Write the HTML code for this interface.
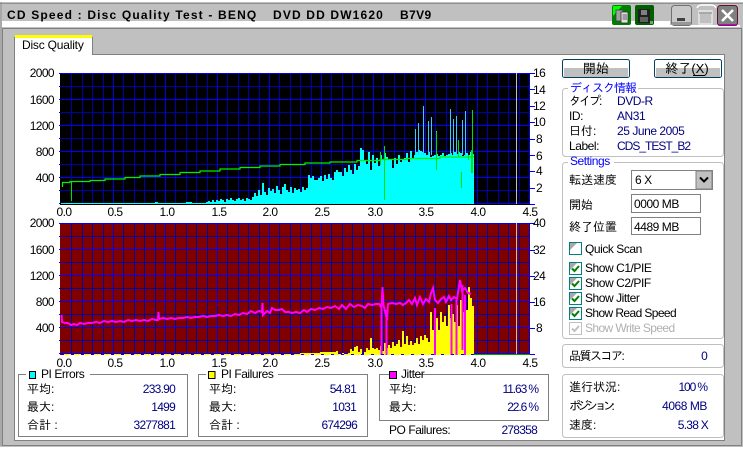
<!DOCTYPE html>
<html lang="ja"><head><meta charset="utf-8"><title>CD Speed</title>
<style>
html,body{margin:0;padding:0;background:#fff}
body{width:743px;height:449px;overflow:hidden}
svg{display:block;letter-spacing:-.45px}
text{font-family:"Liberation Sans","IPAGothic","Noto Sans CJK JP",sans-serif;font-size:12px;fill:#000}
.n{letter-spacing:-.6px}
.v{fill:#000080;text-anchor:end;letter-spacing:-.75px}
.p{letter-spacing:-1.1px}
.u{fill:#000080}
.b{fill:#0000ff}
.c{text-anchor:middle}
.e{text-anchor:end}
.g{fill:#b0b0b0}
.j{letter-spacing:0}
.box{fill:none;stroke:#808080}
.rb{fill:none;stroke:#c0c0c0}
</style></head><body>
<svg xmlns="http://www.w3.org/2000/svg" width="743" height="449" viewBox="0 0 743 449">
<defs>
<g id="grid" shape-rendering="crispEdges" fill="none">
<path stroke="#0000a8" d="M71.5 0V131M82.5 0V131M92.5 0V131M103.5 0V131M123.5 0V131M134.5 0V131M144.5 0V131M155.5 0V131M175.5 0V131M186.5 0V131M196.5 0V131M207.5 0V131M227.5 0V131M238.5 0V131M248.5 0V131M259.5 0V131M279.5 0V131M290.5 0V131M300.5 0V131M311.5 0V131M331.5 0V131M342.5 0V131M352.5 0V131M363.5 0V131M383.5 0V131M394.5 0V131M404.5 0V131M415.5 0V131M435.5 0V131M446.5 0V131M456.5 0V131M467.5 0V131M487.5 0V131M498.5 0V131M508.5 0V131M519.5 0V131"/>
<path stroke="#0000a8" d="M59 13.5H529M59 39.5H529M59 65.5H529M59 91.5H529M59 117.5H529"/>
<path stroke="#0000e0" d="M113.5 0V131M165.5 0V131M217.5 0V131M269.5 0V131M321.5 0V131M373.5 0V131M425.5 0V131M477.5 0V131M529.5 0V131"/>
<path stroke="#0000ff" d="M59 .5H530M59 26.5H530M59 52.5H530M59 78.5H530M59 104.5H530M59 130.5H530"/>
<path stroke="#c0c0c0" d="M516.5 0V131"/>
</g>
<g id="chk">
<rect x=".5" y=".5" width="12" height="12" fill="#fff" stroke="#008080"/>
<path d="M1 1H8L1 8Z" fill="#a8a8a8"/>
</g>
<path id="tick" d="M3 6.5L5.5 9 10 4" fill="none" stroke-width="2"/>
</defs>

<!-- window frame -->
<rect width="743" height="449" fill="#fff"/>
<rect x="0" y="2" width="743" height="445" fill="#c0c0c0"/>
<path d="M0 3.5H743" stroke="#909090" shape-rendering="crispEdges"/>
<path d="M1 2V446" stroke="#909090"/>
<rect x="2" y="21" width="668" height="6" fill="#fff"/>
<rect x="670" y="25" width="70" height="2" fill="#fff"/>
<rect x="3" y="28" width="738" height="417" fill="#c0c0c0"/>
<path d="M2.5 445.500V28.500H741.500V445.500H2.500Z" fill="none" stroke="#808080" shape-rendering="crispEdges"/>
<text x="7" y="20" style="font-weight:bold;letter-spacing:1.18px" transform="translate(0,-1)">CD Speed : Disc Quality Test - BENQ</text>
<text x="273" y="19" style="font-weight:bold;letter-spacing:1.15px">DVD DD DW1620</text>
<text x="400" y="19" style="font-weight:bold;letter-spacing:.4px">B7V9</text>

<!-- title icons -->
<rect x="612" y="5" width="19" height="20" rx="2" fill="#008000"/>
<path d="M613 6H622L613 16Z" fill="#00ff00"/>
<rect x="616" y="10" width="7" height="11" fill="#a0a0a0" stroke="#404040" stroke-width=".8"/>
<rect x="621" y="12" width="7" height="11" fill="#e0e0e0" stroke="#303030" stroke-width=".8"/>
<path d="M622.500 15H627M622.500 17H627M622.500 19H627" stroke="#303030" stroke-width=".8"/>
<rect x="635" y="5" width="19" height="20" rx="2" fill="#006000"/>
<path d="M638 9H650V23H638Z" fill="#202020"/>
<rect x="641" y="10" width="6" height="5" fill="#808080"/>
<rect x="640" y="17" width="8" height="5" fill="#606060"/>
<rect x="650" y="21" width="3" height="3" fill="#909090"/>
<rect x="671.500" y="5.500" width="20" height="20" rx="3" fill="#c8c8c8" stroke="#707070"/>
<rect x="672" y="22" width="19" height="3" fill="#989898"/>
<rect x="677" y="18" width="8" height="3" fill="#404040"/>
<path d="M697 8Q698 5 702 5H711Q715 5 716 8" fill="none" stroke="#fff" stroke-width="1.500"/>
<rect x="699" y="11" width="13" height="13" fill="none" stroke="#e8e8e8" stroke-width="1.500"/>
<path d="M699 13H712" stroke="#a8a8a8" stroke-width="2"/>
<rect x="717.500" y="5.500" width="20" height="20" rx="3" fill="#808080" stroke="#601030"/>
<path d="M718 25H737" stroke="#a000a0" stroke-width="1.500"/>
<path d="M722 10L733 21M733 10L722 21" stroke="#fff" stroke-width="2.500"/>

<!-- tab & page -->
<rect x="14.500" y="54.500" width="710" height="386" fill="#fff" stroke="#808080" shape-rendering="crispEdges"/>
<rect x="15" y="37" width="77" height="18" fill="#fff"/>
<path d="M14.500 54V37M92.500 37V54" stroke="#808080" shape-rendering="crispEdges"/>
<rect x="15" y="35" width="77" height="3" fill="#ffff00"/>
<rect x="15" y="54" width="77" height="1" fill="#fff"/>
<text x="22" y="49" style="letter-spacing:-.2px">Disc Quality</text>

<!-- upper chart -->
<rect x="60" y="73" width="470" height="132" fill="#000"/>
<use href="#grid" y="73"/>
<path fill="#00ffff" shape-rendering="crispEdges" d="M61 204V203H155V202H158V203H186V202H192V203H206V202h2V201h2V202h2V200h2V202h2V200h2V201h2V199h2V200h2V202h2V199h2V200h2V198h2V200h2V201h2V199h2V198h2V200h2V199h2V201h2V198h2V199h2V200h2V197h2V193h2V196h2V190h2V195h2V183h2V192h2V195h2V188h2V191h2V189h2V193h2V186h2V190h2V194h2V187h2V184h2V190h2V192h2V187h2V193h2V188h2V190h2V189h2V192h2V187h2V190h2V188h2V175h2V178h2V176h2V180h2V180h2V178h2V176h2V181h2V175h2V179h2V174h2V178h2V180h2V172h2V170h2V172h2V172h2V176h2V168h2V172h2V165h2V170h2V174h2V164h2V170h2V166h2V148h2V150h2V160h2V164h2V152h2V170h2V155h2V163h2V158h2V166h2V155h2V160h2V153h2V157h2V160h2V160h2V168h2V158h2V164h2V155h2V162h2V160h2V158h2V153h2V162h2V151h2V158h2V155h2V152h2V150h2V151h2V152h2V153h2V155h2V152h2V157h2V156h2V155h2V154h2V156h2V155h2V153h2V156h2V155h2V154h2V153h2V155h2V152h2V154h2V152h2V153h2V156h2V155h2V153h2V155h2V152h2V154h2V156H474V204Z"/>
<path stroke="#33ccff" fill="none" shape-rendering="crispEdges" d="M415.500 129V155M418.500 123V155M423.500 106V155M428.500 121V155M431.500 117V155M436.500 131V155M450.500 109V155M453.500 119V155M456.500 116V155M462.500 120V155M465.500 111V155"/>
<path stroke="#00f000" fill="none" stroke-width="1.200" d="M62.500 187V182.500H70V181.500H90V180.500H105V179H125V177.500H140V176H160V174.500H180V172.500H200V171H220V169H240V167.500H260V166H280V164.500H305V163H330V162H357V160.500H380V159.500H407V158.500H440V157H474"/>
<path stroke="#00e000" fill="none" shape-rendering="crispEdges" stroke-width="1" d="M71.500 182V201M380.500 152V165M384.500 146V200M436.500 132V170M458.500 140V157M461.500 172V188M471.500 150V173M472.500 110V173M468.500 155V160"/>

<!-- lower chart -->
<rect x="60" y="223" width="470" height="132" fill="#800000"/>
<use href="#grid" y="223"/>
<path fill="#ffff00" shape-rendering="crispEdges" d="M61 355V354H300V353H320V352H336V351h2V354h2V354h2V353h2V354h2V354h2V353h2V349h2V351h2V347h2V346h2V352h2V349h2V354h2V352h2V348h2V350h2V338h2V348h2V349h2V348h2V350h2V346h2V351h2V343h2V348h2V345h2V348h2V342h2V346h2V344h2V340h2V347h2V331h2V344h2V336h2V345h2V341h2V345h2V343h2V338h2V344h2V336h2V340h2V335h2V338h2V342h2V312h2V330h2V325h2V318h2V330h2V312h2V322h2V316h2V326h2V305h2V318h2V314h2V322h2V305h2V326h2V300h2V312h2V304h2V310h2V287h2V298h2V306h2V318H474V355Z"/>
<path fill="none" stroke="#ff00ff" shape-rendering="crispEdges" stroke-width="2" d="M381.500 303V355M386.500 310V355M435 308V355M451.500 304V355M456.500 300V355M462.500 285V350M465 295V355"/>
<path fill="none" stroke="#ff00ff" stroke-width="2" d="M61.500 315L62 322 65 323 68 323 71 325 74 324 77 325 80 323 84 324 88 323 92 323 96 322 100 323 104 321 108 322 112 321 116 322 120 321 124 322 128 320 132 321 136 320 140 321 144 320 148 321 152 319 156 320 158 320 158.500 312 159 319 163 318 167 319 171 318 175 319 179 318 183 318 187 317 191 318 195 317 199 317 203 316 207 317 211 316 215 316 219 315 223 316 227 315 231 316 235 314 239 315 243 313 247 314 251 311 255 313 259 311 262 312 262.500 303 263 315 267 311 270 313 272 308 275 310 279 310 282 309 285 312 289 312 292 313 296 312 300 313 304 310 307 312 311 309 315 310 319 308 323 309 327 307 331 308 335 306 339 309 342 305 346 309 350 304 354 307 358 305 362 306 365 308 368 304 372 305 376 304 379 304 381.500 308 382.500 287 383.500 305 387 320 388 304 392 303 396 304 400 303 403 305 406 303 409 300 412 304 415 298 417 305 420 297 423 304 426 299 429 302 431 293 433 288 435 300 438 303 441 299 444 297 446 302 449 296 451 300 454 297 457 299 460 280 462 291 465 288 468 293 471 294"/>
<path stroke="#00a000" shape-rendering="crispEdges" d="M474 354.500H530"/>
<path stroke="#0000ff" shape-rendering="crispEdges" stroke-dasharray="3 7" d="M61 354.500H474"/>

<!-- right axis ticks -->
<path stroke="#0000ff" shape-rendering="crispEdges" d="M530 73.500H535M530 89.500H535M530 106.500H535M530 122.500H535M530 139.500H535M530 155.500H535M530 171.500H535M530 188.500H535M530 204.500H535M530 223.500H535M530 250.500H535M530 276.500H535M530 302.500H535M530 328.500H535M530 354.500H535"/>

<!-- axis labels -->
<g class="n">
<text x="54" y="77" class="e">2000</text><text x="54" y="104" class="e">1600</text><text x="54" y="130" class="e">1200</text><text x="54" y="156" class="e">800</text><text x="54" y="182" class="e">400</text>
<text x="54" y="227" class="e">2000</text><text x="54" y="254" class="e">1600</text><text x="54" y="280" class="e">1200</text><text x="54" y="306" class="e">800</text><text x="54" y="332" class="e">400</text>
<text x="533" y="77">16</text><text x="533" y="94">14</text><text x="533" y="110">12</text><text x="533" y="126">10</text><text x="536" y="143">8</text><text x="536" y="160">6</text><text x="536" y="175">4</text><text x="536" y="192">2</text>
<text x="533" y="227">40</text><text x="533" y="254">32</text><text x="533" y="280">24</text><text x="533" y="306">16</text><text x="536" y="332">8</text>
<g class="c">
<text x="64" y="216">0.0</text><text x="115" y="216">0.5</text><text x="167" y="216">1.0</text><text x="219" y="216">1.5</text><text x="270" y="216">2.0</text><text x="322" y="216">2.5</text><text x="375" y="216">3.0</text><text x="426" y="216">3.5</text><text x="478" y="216">4.0</text><text x="530" y="216">4.5</text>
<text x="64" y="367">0.0</text><text x="115" y="367">0.5</text><text x="167" y="367">1.0</text><text x="219" y="367">1.5</text><text x="270" y="367">2.0</text><text x="322" y="367">2.5</text><text x="375" y="367">3.0</text><text x="426" y="367">3.5</text><text x="478" y="367">4.0</text><text x="530" y="367">4.5</text>
</g></g>

<!-- stat boxes -->
<g shape-rendering="crispEdges">
<rect class="box" x="18.500" y="374.500" width="169" height="62"/>
<rect x="26" y="372" width="64" height="6" fill="#fff"/>
<rect x="29.500" y="371.500" width="6" height="7" fill="#00ffff" stroke="#000"/>
<rect class="box" x="198.500" y="374.500" width="169" height="62"/>
<rect x="206" y="372" width="72" height="6" fill="#fff"/>
<rect x="208.500" y="371.500" width="6.500" height="7" fill="#ffff00" stroke="#000"/>
<rect class="box" x="379.500" y="374.500" width="169" height="46"/>
<rect x="389" y="372" width="24" height="6" fill="#fff"/>
<rect x="389.500" y="371.500" width="7" height="7" fill="#ff00ff" stroke="#000"/>
</g>
<text x="41" y="378">PI Errors</text>
<text x="221" y="378">PI Failures</text>
<text x="401" y="378">Jitter</text>
<text x="27" y="393" class="j">平均:</text><text x="27" y="411" class="j">最大:</text><text x="27" y="429" class="j">合計 :</text>
<text x="175" y="393" class="v">233.90</text><text x="175" y="411" class="v">1499</text><text x="175" y="429" class="v">3277881</text>
<text x="209" y="393" class="j">平均:</text><text x="209" y="411" class="j">最大:</text><text x="209" y="429" class="j">合計 :</text>
<text x="356" y="393" class="v">54.81</text><text x="356" y="411" class="v">1031</text><text x="357" y="429" class="v">674296</text>
<text x="389" y="393" class="j">平均:</text><text x="389" y="411" class="j">最大:</text>
<text x="538" y="393" class="v p">11.63 %</text><text x="538" y="411" class="v p">22.6 %</text>
<text x="389" y="434">PO Failures:</text><text x="537" y="434" class="v">278358</text>

<!-- buttons -->
<rect x="562.500" y="59.500" width="67" height="18" rx="2" fill="#fff" stroke="#004060"/>
<rect x="564" y="68" width="64" height="9" fill="#c0c0c0"/>
<text x="596" y="73" class="c j" style="font-size:13px">開始</text>
<rect x="654.500" y="59.500" width="67" height="18" rx="2" fill="#fff" stroke="#004060"/>
<rect x="656" y="68" width="64" height="9" fill="#c0c0c0"/>
<text x="687" y="73" class="c j" style="font-size:13px">終了(X)</text>
<path d="M693 75.500H705" stroke="#000"/>

<!-- right groups -->
<rect class="rb" x="562.500" y="88.500" width="161" height="68" rx="3"/>
<rect x="568" y="84" width="70" height="8" fill="#fff"/>
<text x="570" y="92" class="b" style="letter-spacing:-1px">ディスク情報</text>
<text x="569" y="105" style="letter-spacing:-2px">タイプ:</text><text x="569" y="120">ID:</text><text x="569" y="135" class="j">日付:</text><text x="569" y="150">Label:</text>
<text x="617" y="105" class="u">DVD-R</text><text x="617" y="120" class="u">AN31</text><text x="617" y="135" class="u">25 June 2005</text><text x="617" y="150" class="u" style="letter-spacing:-1px">CDS_TEST_B2</text>

<rect class="rb" x="562.500" y="162.500" width="161" height="176" rx="3"/>
<rect x="568" y="158" width="46" height="8" fill="#fff"/>
<text x="570" y="165" class="b">Settings</text>
<text x="569" y="184" class="j">転送速度</text>
<rect x="631.500" y="170.500" width="81" height="19" fill="#fff" stroke="#808080" shape-rendering="crispEdges"/>
<text x="635" y="184">6 X</text>
<rect x="696" y="171" width="16" height="18" fill="#c0c0c0" stroke="#808080"/>
<path d="M700 177.500L704 181.500 708 177.500" fill="none" stroke="#000" stroke-width="2"/>
<text x="569" y="209" class="j">開始</text>
<rect x="631.500" y="194.500" width="69" height="18" fill="#fff" stroke="#808080" shape-rendering="crispEdges"/>
<text x="634" y="208">0000 MB</text>
<text x="569" y="231" class="j">終了位置</text>
<rect x="631.500" y="217.500" width="69" height="17" fill="#fff" stroke="#808080" shape-rendering="crispEdges"/>
<text x="634" y="231">4489 MB</text>

<use href="#chk" x="569" y="242"/>
<text x="585" y="253">Quick Scan</text>
<use href="#chk" x="569" y="262"/><use href="#tick" x="569" y="262" stroke="#008000"/>
<text x="585" y="272">Show C1/PIE</text>
<use href="#chk" x="569" y="277"/><use href="#tick" x="569" y="277" stroke="#008000"/>
<text x="585" y="287">Show C2/PIF</text>
<use href="#chk" x="569" y="292"/><use href="#tick" x="569" y="292" stroke="#008000"/>
<text x="585" y="302">Show Jitter</text>
<use href="#chk" x="569" y="307"/><use href="#tick" x="569" y="307" stroke="#008000"/>
<text x="585" y="317" style="letter-spacing:-.6px">Show Read Speed</text>
<rect x="569.500" y="322.500" width="12" height="12" fill="#fff" stroke="#c0c0c0" shape-rendering="crispEdges"/>
<use href="#tick" x="569" y="322" stroke="#c0c0c0"/>
<text x="585" y="332" class="g" style="letter-spacing:-.6px">Show Write Speed</text>

<rect class="rb" x="562.500" y="344.500" width="161" height="23" rx="3"/>
<text x="569" y="360" style="letter-spacing:-1.500px">品質スコア:</text><text x="707" y="360" class="v">0</text>

<rect class="rb" x="562.500" y="374.500" width="161" height="63" rx="3"/>
<text x="569" y="391" class="j">進行状況:</text><text x="569" y="410" style="letter-spacing:-3.500px">ポジション:</text><text x="569" y="429" class="j">速度:</text>
<text x="707" y="391" class="v p">100 %</text><text x="707" y="410" class="v" style="letter-spacing:-.45px">4068 MB</text><text x="708" y="429" class="v">5.38 X</text>
</svg>
</body></html>
